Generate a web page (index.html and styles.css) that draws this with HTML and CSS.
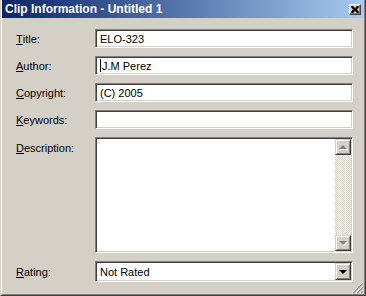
FILE: index.html
```html
<!DOCTYPE html>
<html lang="en">
<head>
  <meta charset="UTF-8">
  <title>Clip Information</title>
  <link rel="stylesheet" href="styles.css">
</head>
<body>
  <div class="window">
    <div class="titlebar">
      <span class="caption">Clip Information - Untitled 1</span>
      <span class="close-btn">
        <svg width="8" height="7" viewBox="0 0 8 7"><path d="M0 0h2l2 2 2-2h2v1L6 3.5 8 6v1H6L4 5 2 7H0V6l2-2.5L0 1z" fill="#000"/></svg>
      </span>
    </div>

    <!-- Formular -->
    <div class="form">
      <label class="lbl"><u>T</u>itle:</label>
      <div class="field">ELO-323</div>

      <label class="lbl"><u>A</u>uthor:</label>
      <div class="field"><span class="caret"></span>J.M Perez</div>

      <label class="lbl"><u>C</u>opyright:</label>
      <div class="field">(C) 2005</div>

      <label class="lbl"><u>K</u>eywords:</label>
      <div class="field"></div>

      <label class="lbl lbl-top"><u>D</u>escription:</label>
      <div class="field memo">
        <div class="memo-text"></div>
        <div class="vscroll">
          <span class="sbtn"><span class="arrow-up"></span></span>
          <span class="track"></span>
          <span class="sbtn"><span class="arrow-down dim"></span></span>
        </div>
      </div>

      <label class="lbl"><u>R</u>ating:</label>
      <div class="field combo">
        <span class="combo-text">Not Rated</span>
        <span class="sbtn"><span class="arrow-down"></span></span>
      </div>
    </div>

    <svg class="grip" width="12" height="12" viewBox="0 0 12 12">
      <path d="M11 1L1 11M11 5L5 11M11 9L9 11" stroke="#808080" stroke-width="1.2"/>
      <path d="M11 0L0 11M11 4L4 11M11 8L8 11" stroke="#fff" stroke-width="1"/>
    </svg>
  </div>
</body>
</html>
```

FILE: styles.css
```css
body {
  margin: 0;
  background: #d4d0c8;
  font-family: "Liberation Sans", Arial, sans-serif;
  font-size: 11px;
}

.window {
  position: relative;
  box-sizing: border-box;
  width: 366px;
  height: 296px;
  background: #d4d0c8;
  border-left: 1px solid #d4d0c8;
  border-right: 1px solid #404040;
  border-bottom: 1px solid #404040;
  box-shadow: inset 1px 0 #fff, inset -1px -1px #808080;
}

.titlebar {
  height: 18px;
  margin: 0 1px 0 1px;
  display: flex;
  align-items: center;
  justify-content: space-between;
  padding: 0 3px 0 3px;
  background: linear-gradient(to right, #0a246a, #a6caf0);
}

.caption {
  color: #fff;
  font-weight: bold;
  font-size: 12px;
}

.close-btn {
  width: 12px;
  height: 11px;
  box-sizing: border-box;
  display: flex;
  align-items: center;
  justify-content: center;
  background: #d4d0c8;
  border: 1px solid;
  border-color: #fff #404040 #404040 #fff;
  box-shadow: inset -1px -1px #808080;
}

.form {
  display: grid;
  grid-template-columns: 79px 258px;
  grid-template-rows: 19px 19px 19px 19px 116px 21px;
  row-gap: 8px;
  padding: 11px 0 0 15px;
}

.lbl {
  display: flex;
  align-items: center;
  color: #000;
}

.lbl-top {
  align-items: flex-start;
  padding-top: 5px;
}

.field {
  box-sizing: border-box;
  display: flex;
  align-items: center;
  background: #fff;
  border: 1px solid;
  border-color: #808080 #fff #fff #808080;
  box-shadow: inset 1px 1px #404040, inset -1px -1px #d4d0c8;
  padding-left: 4px;
  color: #000;
}

.caret {
  width: 1px;
  height: 13px;
  background: #000;
  margin-right: 1px;
}

.memo {
  align-items: stretch;
  padding: 1px;
}

.memo-text {
  flex: 1;
}

.vscroll {
  width: 16px;
  display: flex;
  flex-direction: column;
}

.track {
  flex: 1;
  background: repeating-conic-gradient(#fff 0 25%, #d4d0c8 0 50%) 0 0 / 2px 2px;
}

.sbtn {
  box-sizing: border-box;
  width: 16px;
  height: 16px;
  display: flex;
  align-items: center;
  justify-content: center;
  background: #d4d0c8;
  border: 1px solid;
  border-color: #d4d0c8 #404040 #404040 #d4d0c8;
  box-shadow: inset 1px 1px #fff, inset -1px -1px #808080;
}

.arrow-up {
  width: 0;
  height: 0;
  border-left: 4px solid transparent;
  border-right: 4px solid transparent;
  border-bottom: 4px solid #808080;
  filter: drop-shadow(1px 1px 0 #fff);
}

.arrow-down {
  width: 0;
  height: 0;
  border-left: 4px solid transparent;
  border-right: 4px solid transparent;
  border-top: 4px solid #000;
}

.arrow-down.dim {
  border-top-color: #808080;
  filter: drop-shadow(1px 1px 0 #fff);
}

.combo {
  padding: 1px 1px 1px 4px;
  justify-content: space-between;
}

.combo .sbtn {
  height: 17px;
}

.grip {
  position: absolute;
  right: 1px;
  bottom: 1px;
}
```
